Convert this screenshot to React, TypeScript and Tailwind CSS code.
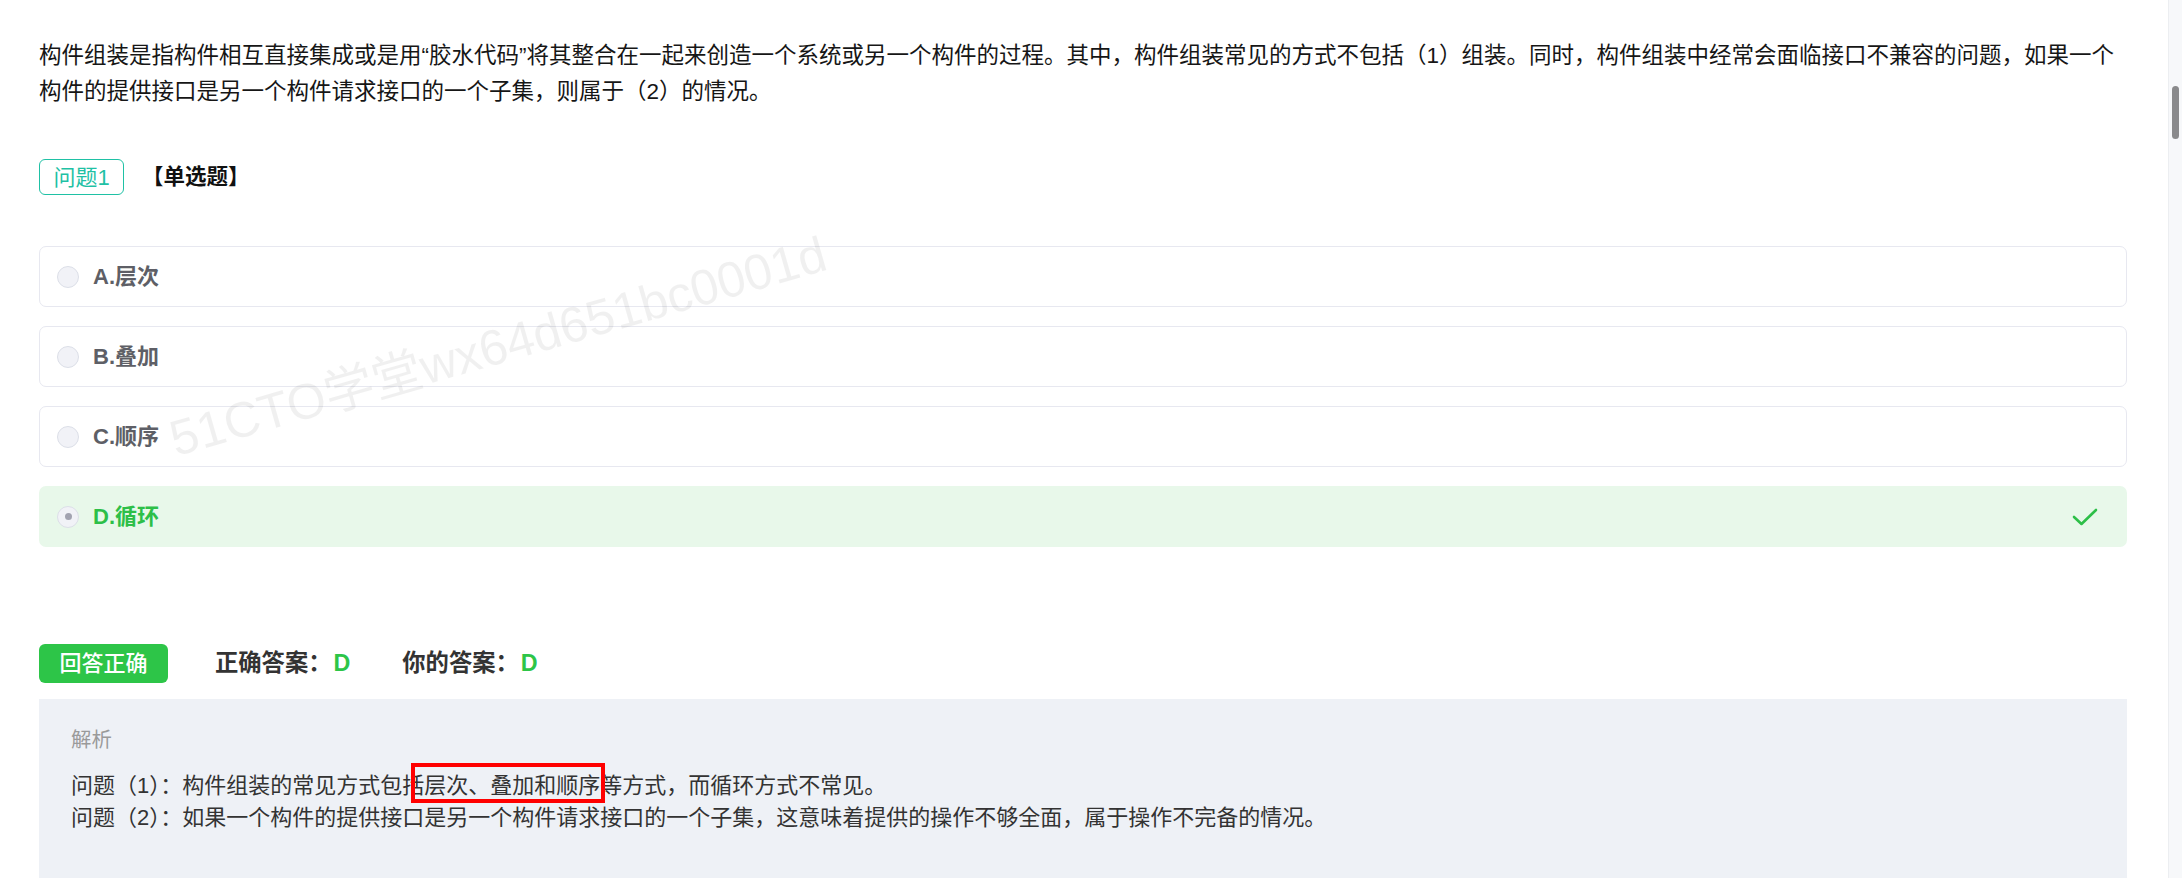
import React from "react";

const FONT = { fontFamily: '"Liberation Sans", "Noto Sans CJK SC", sans-serif' };

type Opt = { key: string; label: string; picked?: boolean };

const options: Opt[] = [
  { key: "A", label: "层次" },
  { key: "B", label: "叠加" },
  { key: "C", label: "顺序" },
  { key: "D", label: "循环", picked: true },
];

function Radio({ checked }: { checked?: boolean }) {
  return (
    <span className="flex h-[22px] w-[22px] shrink-0 items-center justify-center rounded-full border border-[#dcdfe8] bg-[#f1f2f7]">
      {checked && <span className="h-[7px] w-[7px] rounded-full bg-[#a2a3b0]" />}
    </span>
  );
}

function CheckMark() {
  return (
    <svg width="26" height="18" viewBox="0 0 26 18" fill="none">
      <path d="M2 9 L9.5 16 L24 2" stroke="#2dbf48" strokeWidth="2.6" strokeLinecap="round" strokeLinejoin="round" />
    </svg>
  );
}

function OptionRow({ opt }: { opt: Opt }) {
  return (
    <div
      className={
        opt.picked
          ? "flex h-[61px] items-center rounded-[7px] border border-transparent bg-[#e8f8ea] pl-[17px] pr-[28px]"
          : "flex h-[61px] items-center rounded-[7px] border border-[#e7e8f0] bg-white pl-[17px] pr-[28px]"
      }
    >
      <Radio checked={opt.picked} />
      <span
        className={
          opt.picked
            ? "ml-[14px] flex-1 text-[22px] font-semibold text-[#2dbf48]"
            : "ml-[14px] flex-1 text-[22px] font-semibold text-[#5e5f66]"
        }
      >
        {opt.key}.{opt.label}
      </span>
      {opt.picked && <CheckMark />}
    </div>
  );
}

export default function App() {
  return (
    <div className="flex h-[878px] w-full overflow-hidden bg-white" style={FONT}>
      <main className="relative flex-1 pl-[39px] pr-[41px] pt-[38px]">
        {/* watermark */}
        <div className="pointer-events-none absolute left-[498px] top-[347px] -translate-x-1/2 -translate-y-1/2 -rotate-[16deg] whitespace-nowrap text-[50px] text-black/[0.06]">
          51CTO学堂wx64d651bc0001d
        </div>

        <p className="text-[22.5px] leading-[36px] text-[#161616]">
          构件组装是指构件相互直接集成或是用“胶水代码”将其整合在一起来创造一个系统或另一个构件的过程。其中，构件组装常见的方式不包括（1）组装。同时，构件组装中经常会面临接口不兼容的问题，如果一个构件的提供接口是另一个构件请求接口的一个子集，则属于（2）的情况。
        </p>

        <div className="mt-[49px] flex h-[36px] items-center">
          <span className="flex h-[36px] w-[85px] items-center justify-center rounded-[6px] border border-[#1fc1a5] text-[22px] text-[#1fc1a5]">
            问题1
          </span>
          <span className="ml-[18px] text-[21.5px] font-bold text-[#111]">【单选题】</span>
        </div>

        <div className="mt-[51px] flex flex-col gap-[19px]">
          {options.map((o) => (
            <OptionRow key={o.key} opt={o} />
          ))}
        </div>

        <div className="mt-[97px] flex h-[39px] items-center">
          <span className="flex h-[39px] w-[129px] items-center justify-center rounded-[6px] bg-[#2dc548] text-[22px] font-medium text-white">
            回答正确
          </span>
          <span className="ml-[47px] text-[23.3px] font-bold text-[#333]">
            正确答案：<span className="ml-[2px] text-[#2dc548]">D</span>
          </span>
          <span className="ml-[52px] text-[23.3px] font-bold text-[#333]">
            你的答案：<span className="ml-[2px] text-[#2dc548]">D</span>
          </span>
        </div>

        <section className="relative mt-[16px] bg-[#eef1f6] px-[32px] pb-[80px] pt-[27px]">
          <div className="text-[20.4px] leading-[28px] text-[#9a9a9a]">解析</div>
          <div className="mt-[16px] text-[22px] leading-[32px] text-[#333]">
            <div>问题（1）：构件组装的常见方式包括层次、叠加和顺序等方式，而循环方式不常见。</div>
            <div>问题（2）：如果一个构件的提供接口是另一个构件请求接口的一个子集，这意味着提供的操作不够全面，属于操作不完备的情况。</div>
          </div>
          {/* highlight box */}
          <div className="pointer-events-none absolute left-[372px] top-[64px] h-[40px] w-[194px] border-[4px] border-[#ff0000]" />
        </section>
      </main>

      {/* scrollbar */}
      <aside className="w-[14px] shrink-0 border-l border-[#eceef1] bg-[#f7f8fa]">
        <div className="ml-[3px] mt-[86px] h-[53px] w-[7px] rounded-full bg-[#8a8a8c]" />
      </aside>
    </div>
  );
}
